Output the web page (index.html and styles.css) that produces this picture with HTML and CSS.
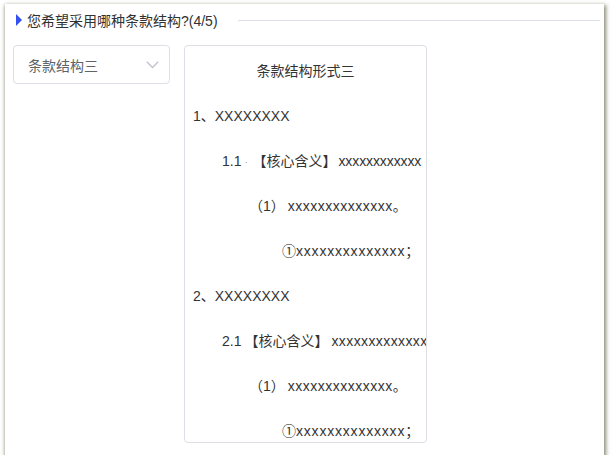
FILE: index.html
```html
<!DOCTYPE html>
<html lang="zh-CN">
<head>
<meta charset="utf-8">
<link rel="stylesheet" href="styles.css">
</head>
<body>
<div class="panel">
  <div class="header">
    <span class="tri"></span>
    <span class="title">您希望采用哪种条款结构?(4/5)</span>
    <span class="rule"></span>
  </div>
  <div class="main">
    <div class="select">
      <span class="select-text">条款结构三</span>
      <svg class="chev" width="13" height="8" viewBox="0 0 13 8"><polyline points="0.8,0.8 6.5,6.6 12.2,0.8" fill="none" stroke="#c0c4cc" stroke-width="1.4"/></svg>
    </div>
    <div class="doc">
      <div class="line center">条款结构形式三</div>
      <div class="line">1、XXXXXXXX</div>
      <div class="line l1">1.1<span class="dot">·</span>【核心含义】<span class="xs">xxxxxxxxxxxx</span></div>
      <div class="line l2">（1）<span class="xm">xxxxxxxxxxxxxx</span>。</div>
      <div class="line l3">①<span class="xl">xxxxxxxxxxxxxx</span>；</div>
      <div class="line">2、XXXXXXXX</div>
      <div class="line l1">2.1<span class="gap"></span>【核心含义】<span class="xw">xxxxxxxxxxxxx</span></div>
      <div class="line l2">（1）<span class="xm">xxxxxxxxxxxxxx</span>。</div>
      <div class="line l3">①<span class="xl">xxxxxxxxxxxxxx</span>；</div>
    </div>
  </div>
</div>
</body>
</html>
```
FILE: styles.css
```css
html, body {
  margin: 0;
  padding: 0;
  background: #ffffff;
}
body {
  font-family: "Liberation Sans", "Noto Sans CJK SC", sans-serif;
  font-size: 14px;
  color: #333333;
}
.panel {
  margin: 4px 0 0 5px;
  width: 599px;
  height: 451px;
  box-sizing: border-box;
  padding: 0 8px;
  background: #ffffff;
  box-shadow: 1px 2px 4px 1px rgba(110, 110, 80, 0.8);
}
.header {
  display: flex;
  align-items: center;
  height: 20px;
  padding-top: 6px;
  margin-bottom: 15px;
}
.tri {
  width: 0;
  height: 0;
  margin-left: 3px;
  border-left: 6px solid #3350f0;
  border-top: 6px solid transparent;
  border-bottom: 6px solid transparent;
}
.title {
  margin-left: 5px;
  color: #303133;
  white-space: nowrap;
}
.rule {
  flex: 1;
  height: 1px;
  background: #dcdfe6;
  margin-left: 20px;
  margin-right: -4px;
}
.main {
  display: flex;
  align-items: flex-start;
  gap: 14px;
}
.select {
  width: 157px;
  height: 39px;
  box-sizing: border-box;
  border: 1px solid #dcdfe6;
  border-radius: 4px;
  display: flex;
  align-items: center;
  justify-content: space-between;
  padding: 0 10px 0 14px;
}
.select-text {
  color: #606266;
}
.chev {
  display: block;
  margin-top: 1px;
}
.doc {
  width: 243px;
  height: 398px;
  box-sizing: border-box;
  border: 1px solid #dcdfe6;
  border-radius: 4px;
  overflow: hidden;
  padding: 3px 0 0 8px;
  white-space: nowrap;
}
.line {
  height: 45px;
  line-height: 45px;
}
.center {
  text-align: center;
  padding-right: 8px;
}
.l1 { padding-left: 29px; }
.l2 { padding-left: 56px; }
.l3 { padding-left: 89px; }
.dot {
  display: inline-block;
  width: 11px;
  padding-left: 3px;
  box-sizing: border-box;
  color: #aaaaaa;
  font-size: 10px;
}
.gap {
  display: inline-block;
  width: 3px;
}
.xs { letter-spacing: -0.1px; margin-left: 2px; }
.xw { letter-spacing: 0.4px; margin-left: 3px; }
.xm { letter-spacing: 0.5px; margin-left: 3px; }
.xl { letter-spacing: 0.8px; }
```
